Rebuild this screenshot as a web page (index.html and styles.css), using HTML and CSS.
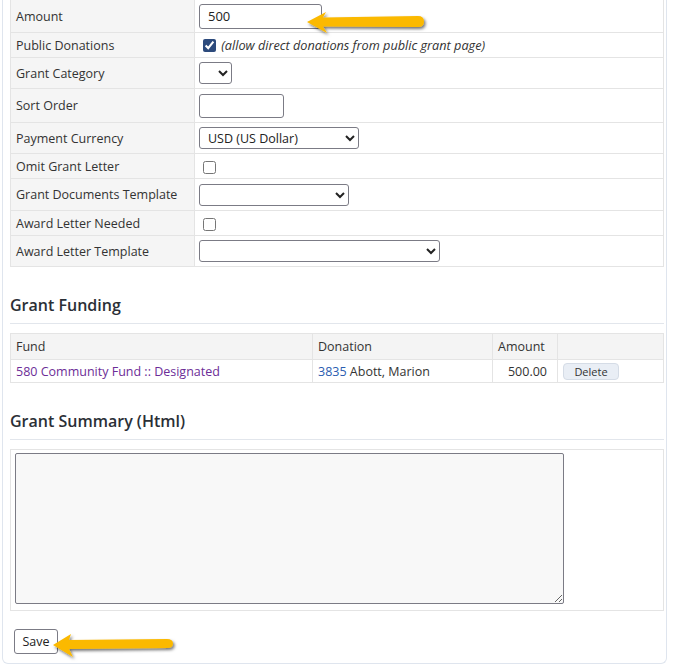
FILE: index.html
```html
<!DOCTYPE html>
<html lang="en">
  <head>
    <meta charset="UTF-8" />
    <meta name="viewport" content="width=device-width, initial-scale=1.0" />
    <title>Grant</title>
    <link rel="stylesheet" href="styles.css">
  </head>
  <body>
    <div class="card">
      <!-- grant properties -->
      <table class="form-table">
        <tr class="row-amount">
          <th>Amount</th>
          <td><input type="text" class="amount-input" value="500" /></td>
        </tr>
        <tr class="row-check">
          <th>Public Donations</th>
          <td>
            <input type="checkbox" checked />
            <span class="hint">(allow direct donations from public grant page)</span>
          </td>
        </tr>
        <tr class="row-select">
          <th>Grant Category</th>
          <td><select class="sel-category"><option></option></select></td>
        </tr>
        <tr class="row-input">
          <th>Sort Order</th>
          <td><input type="text" class="sort-input" /></td>
        </tr>
        <tr class="row-select">
          <th>Payment Currency</th>
          <td><select class="sel-currency"><option>USD (US Dollar)</option></select></td>
        </tr>
        <tr class="row-check">
          <th>Omit Grant Letter</th>
          <td><input type="checkbox" /></td>
        </tr>
        <tr class="row-select2">
          <th>Grant Documents Template</th>
          <td><select class="sel-docs"><option></option></select></td>
        </tr>
        <tr class="row-check">
          <th>Award Letter Needed</th>
          <td><input type="checkbox" /></td>
        </tr>
        <tr class="row-select">
          <th>Award Letter Template</th>
          <td><select class="sel-award"><option></option></select></td>
        </tr>
      </table>

      <!-- funding -->
      <h3 class="section-title">Grant Funding</h3>
      <table class="grid-table">
        <colgroup>
          <col class="col-fund" />
          <col class="col-donation" />
          <col class="col-amount" />
          <col />
        </colgroup>
        <thead>
          <tr>
            <th>Fund</th>
            <th>Donation</th>
            <th>Amount</th>
            <th></th>
          </tr>
        </thead>
        <tbody>
          <tr>
            <td><a href="#" class="link-visited">580 Community Fund :: Designated</a></td>
            <td><a href="#" class="link">3835</a> Abott, Marion</td>
            <td class="num">500.00</td>
            <td><button class="btn-small">Delete</button></td>
          </tr>
        </tbody>
      </table>

      <!-- summary -->
      <h3 class="section-title">Grant Summary (Html)</h3>
      <div class="summary-box">
        <textarea class="summary-text"></textarea>
      </div>

      <div class="actions">
        <button class="btn-save">Save</button>
      </div>
    </div>

    <svg class="callouts" width="676" height="665" viewBox="0 0 676 665">
      <defs>
        <filter id="arrowShadow" x="-10%" y="-50%" width="130%" height="200%">
          <feDropShadow dx="1.5" dy="2" stdDeviation="1.4" flood-color="#000" flood-opacity="0.55" />
        </filter>
      </defs>
      <path filter="url(#arrowShadow)" fill="#fbb900"
        d="M307,22 L326,12 L323,17.5 L418,16 Q424,16 424,21.5 Q424,27 418,27 L323,26.5 L327,33 Z" />
      <path filter="url(#arrowShadow)" fill="#fbb900"
        d="M53,645 L71,634 L69,640 L167,639 Q173,639 173,643.5 Q173,648 167,648 L69,649 L73,657 Z" />
    </svg>
  </body>
</html>
```

FILE: styles.css
```css
body {
  margin: 0;
  background-color: #fff;
  font-family: "Open Sans", "Noto Sans", sans-serif;
  font-size: 12.5px;
  color: #333;
}
.card {
  position: relative;
  width: 655px;
  margin-left: 2px;
  padding: 0 1px 9px 7px;
  border: 1px solid #dfe5ee;
  border-top: none;
  border-radius: 0 0 6px 6px;
}
.form-table {
  width: 654px;
  margin-top: -1px;
  border-collapse: collapse;
}
.form-table th,
.form-table td {
  border: 1px solid #e4e4e4;
  vertical-align: middle;
}
.form-table th {
  width: 173px;
  padding: 0 5px;
  background-color: #f5f5f5;
  text-align: left;
  font-weight: normal;
}
.form-table td {
  padding: 0 4px;
}
.row-amount th {
  height: 32px;
}
.row-check th {
  height: 24px;
}
.row-select th {
  height: 30px;
}
.row-select2 th {
  height: 31px;
}
.row-input th {
  height: 33px;
}
input[type="text"] {
  box-sizing: border-box;
  display: block;
  padding: 0 8px;
  border: 1px solid #7b7b85;
  border-radius: 3px;
  font-family: inherit;
  font-size: 13px;
  color: #222;
}
.amount-input {
  width: 123px;
  height: 25px;
}
.sort-input {
  width: 85px;
  height: 24px;
}
input[type="checkbox"] {
  width: 13px;
  height: 13px;
  margin: 0 0 0 4px;
  vertical-align: middle;
  accent-color: #2c4a7c;
}
.hint {
  margin-left: 2px;
  font-style: italic;
  font-size: 12.7px;
  vertical-align: middle;
}
select {
  box-sizing: border-box;
  display: block;
  height: 22px;
  padding: 0 4px;
  border: 1px solid #7b7b85;
  border-radius: 3px;
  background-color: #fff;
  font-family: inherit;
  font-size: 12.5px;
  color: #222;
}
.sel-category {
  width: 33px;
}
.sel-currency {
  width: 160px;
}
.sel-docs {
  width: 150px;
}
.sel-award {
  width: 241px;
}
.section-title {
  width: 654px;
  margin: 27px 0 0;
  padding-bottom: 7px;
  border-bottom: 1px solid #e2e6ec;
  font-size: 16px;
  line-height: 22px;
  font-weight: 600;
  color: #2b2f36;
}
.grid-table {
  width: 654px;
  margin-top: 9px;
  border-collapse: collapse;
  table-layout: fixed;
}
.col-fund {
  width: 302px;
}
.col-donation {
  width: 180px;
}
.col-amount {
  width: 65px;
}
.grid-table th,
.grid-table td {
  border: 1px solid #e4e4e4;
  padding: 0 5px;
  text-align: left;
  white-space: nowrap;
}
.grid-table th {
  height: 25px;
  background-color: #f4f4f4;
  font-weight: normal;
}
.grid-table td {
  height: 22px;
}
.grid-table td.num {
  text-align: right;
  padding-right: 10px;
}
.link-visited {
  color: #6c2d97;
  text-decoration: none;
}
.link {
  color: #2a5cb0;
  text-decoration: none;
}
.btn-small {
  box-sizing: border-box;
  width: 56px;
  height: 17px;
  padding: 0;
  border: 1px solid #d5dce6;
  border-radius: 4px;
  background-color: #e9eef5;
  font-family: inherit;
  font-size: 11px;
  color: #333;
}
.summary-box {
  width: 644px;
  margin-top: 9px;
  padding: 3px 4px 6px;
  border: 1px solid #e4e4e4;
}
.summary-text {
  box-sizing: border-box;
  display: block;
  width: 549px;
  height: 151px;
  border: 1px solid #7b7b85;
  border-radius: 2px;
  background-color: #f8f8f8;
}
.actions {
  padding: 18px 0 0 4px;
}
.btn-save {
  box-sizing: border-box;
  width: 44px;
  height: 25px;
  padding: 0;
  border: 1px solid #7b7b85;
  border-radius: 3px;
  background-color: #fff;
  font-family: inherit;
  font-size: 12.5px;
  color: #222;
}
.callouts {
  position: absolute;
  left: 0;
  top: 0;
  pointer-events: none;
}
```
